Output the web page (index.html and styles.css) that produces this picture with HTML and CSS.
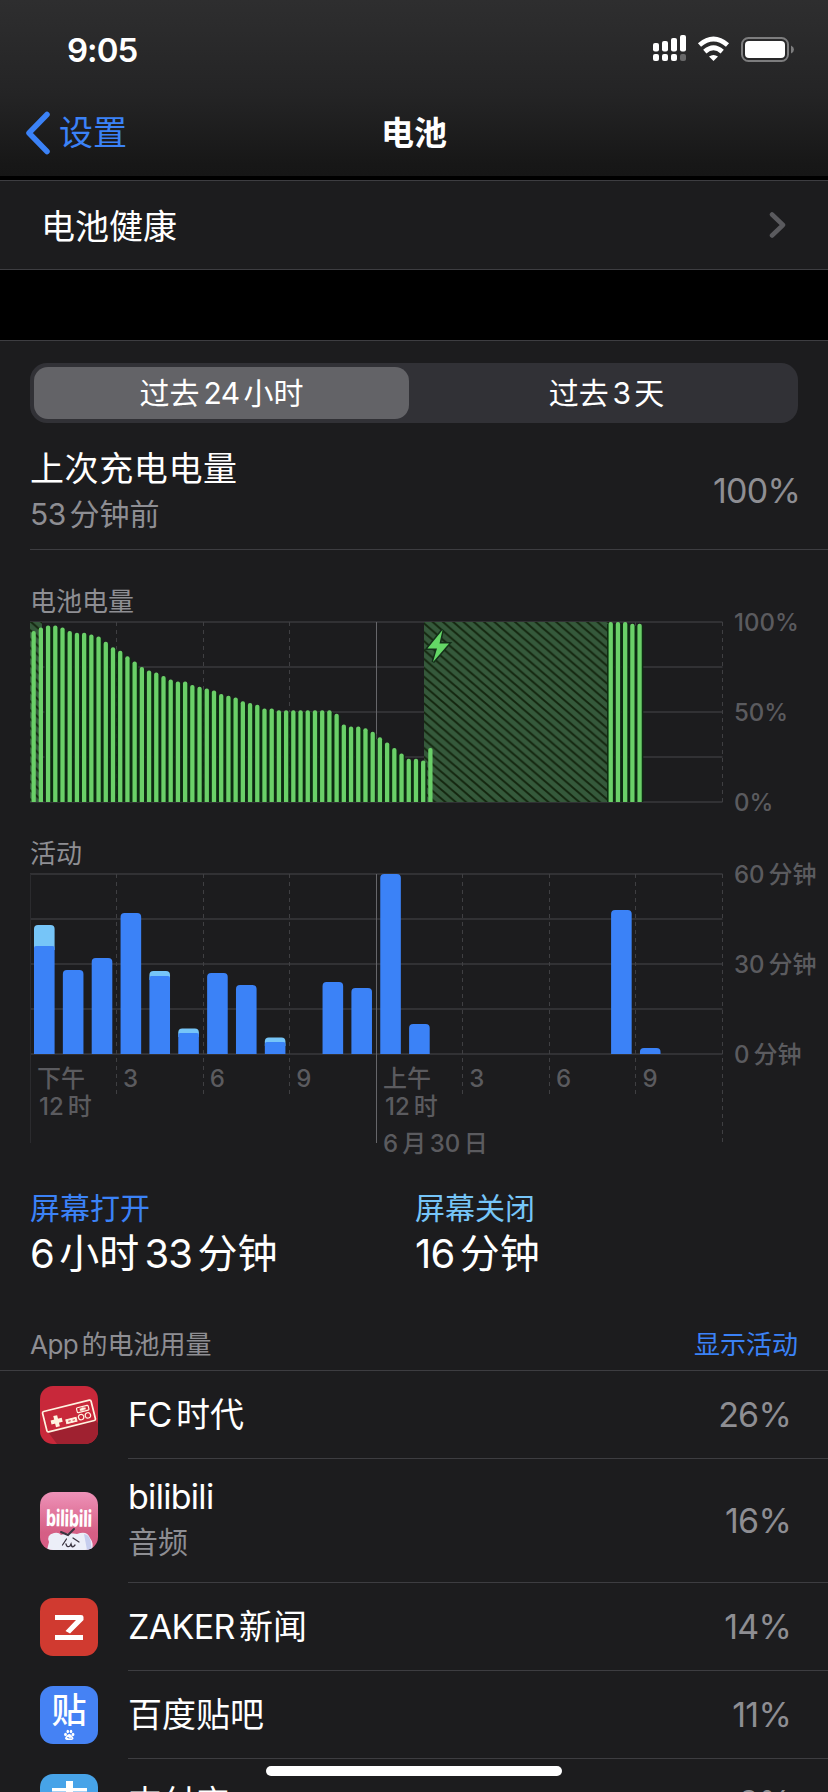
FILE: index.html
```html
<!DOCTYPE html>
<html lang="zh-CN">
<head>
    <meta charset="UTF-8">
    <meta name="viewport" content="width=device-width, initial-scale=1.0">
    <title>电池</title>
    <link rel="stylesheet" href="styles.css">
</head>
<body>
    <header class="header">
        <div class="status-bar">
            <span class="time">9:05</span>
            <svg class="status-icons" width="144" height="30" viewBox="0 0 144 30">
                <g fill="#fff">
                    <rect x="1" y="10" width="6" height="8.500" rx="2"/>
                    <rect x="10" y="8" width="6" height="10.500" rx="2"/>
                    <rect x="19" y="5" width="6" height="13.500" rx="2"/>
                    <rect x="28" y="2" width="6" height="16.500" rx="2"/>
                    <rect x="1" y="21" width="6" height="7" rx="2"/>
                    <rect x="10" y="21" width="6" height="7" rx="2"/>
                    <rect x="19" y="21" width="6" height="7" rx="2"/>
                    <rect x="28" y="21" width="6" height="7" rx="2" opacity=".3"/>
                    <path d="M61.500 28 L57 23.600 Q61.500 20.200 66 23.600 Z"/>
                </g>
                <g fill="none" stroke="#fff" stroke-width="4.800">
                    <path d="M47.500 12 Q61.500 0 75.500 12"/>
                    <path d="M52.800 18.600 Q61.500 10.800 70.200 18.600"/>
                </g>
                <rect x="90" y="5" width="46" height="23" rx="6.500" fill="none" stroke="#7d7d7e" stroke-width="2"/>
                <rect x="93" y="8" width="40" height="17" rx="4" fill="#fff"/>
                <path d="M139 12.500 Q142 14 142 16.500 Q142 19 139 20.500 Z" fill="#7d7d7e"/>
            </svg>
        </div>
        <nav class="nav">
            <a class="back">
                <svg width="26" height="44" viewBox="0 0 26 44"><path d="M23 3.500 L5 22 L23 40.500" fill="none" stroke="#3b82f7" stroke-width="5.500" stroke-linecap="round" stroke-linejoin="round"/></svg>
                <span>设置</span>
            </a>
            <h1 class="title">电池</h1>
            <span></span>
        </nav>
    </header>

    <section class="health">
        <span>电池健康</span>
        <svg width="18" height="28" viewBox="0 0 18 28"><path d="M4 3.500 L15 14 L4 24.500" fill="none" stroke="#5a5a5e" stroke-width="4.500" stroke-linecap="round" stroke-linejoin="round"/></svg>
    </section>

    <main class="usage">
        <div class="segmented">
            <span class="segment active">过去<span class="num">24</span>小时</span>
            <span class="segment">过去<span class="num">3</span>天</span>
        </div>

        <div class="last-charge">
            <div>
                <div class="charge-title">上次充电电量</div>
                <div class="charge-time"><span class="num first">53</span>分钟前</div>
            </div>
            <span class="percent">100%</span>
        </div>

        <h2 class="chart-label level-label">电池电量</h2>
        <svg class="chart" id="level-chart" width="828" height="190" viewBox="0 0 828 190"></svg>

        <h2 class="chart-label activity-label">活动</h2>
        <svg class="chart" id="activity-chart" width="828" height="290" viewBox="0 0 828 290"></svg>

        <div class="stats">
            <div>
                <div class="stat-name on">屏幕打开</div>
                <div class="stat-value"><span class="num first">6</span>小时<span class="num">33</span>分钟</div>
            </div>
            <div>
                <div class="stat-name off">屏幕关闭</div>
                <div class="stat-value"><span class="num first">16</span>分钟</div>
            </div>
        </div>

        <div class="list-header">
            <span><span class="num first">App</span>的电池用量</span>
            <a class="toggle">显示活动</a>
        </div>

        <ul class="app-list">
            <li class="app">
                <svg class="app-icon" viewBox="0 0 58 58">
                    <rect width="58" height="58" fill="#c8283a"/>
                    <path d="M8 46 L55 34 L58 37 V58 H17 Z" fill="#9f2130"/>
                    <g transform="rotate(-14 29 30)" fill="none" stroke="#fff3e0">
                        <rect x="4" y="19.500" width="50" height="21" rx="1.500" fill="#c8283a" stroke-width="1.700"/>
                        <path d="M10 32 H21.500 M15.700 26.300 V37.700" stroke-width="4"/>
                        <rect x="25" y="33" width="10.500" height="4" fill="#fff3e0" stroke-width="1"/>
                        <path d="M27 35 H29.500 M31.500 35 H34" stroke="#c8283a" stroke-width="1"/>
                        <rect x="38" y="24" width="12" height="5" rx="1" stroke-width="1.200"/>
                        <path d="M41 26.500 H47 M44 25 V28" stroke-width="2"/>
                        <circle cx="40.500" cy="34" r="2.700" stroke-width="1.200"/>
                        <circle cx="47.500" cy="34" r="2.700" stroke-width="1.200"/>
                    </g>
                </svg>
                <div class="app-row">
                    <div class="app-name"><span class="num first">FC</span>时代</div>
                    <span class="percent">26%</span>
                </div>
            </li>
            <li class="app tall">
                <svg class="app-icon" viewBox="0 0 58 58">
                    <defs>
                        <linearGradient id="pink" x1="0" y1="0" x2="0" y2="1">
                            <stop offset="0" stop-color="#ee92b8"/>
                            <stop offset=".7" stop-color="#d55f85"/>
                            <stop offset="1" stop-color="#d85c85"/>
                        </linearGradient>
                    </defs>
                    <rect width="58" height="58" fill="url(#pink)"/>
                    <path d="M7 58 L9 50 Q6 43 14 41 Q19 40 21 43 Q28 40 37 42 Q47 38 50 46 Q54 51 52 58 Z" fill="#eceef8"/>
                    <path d="M44 42 Q51 43 51 53 L52 58 H47 Z" fill="#c6cdee"/>
                    <g fill="none" stroke="#3a3440" stroke-linecap="round">
                        <path d="M21 40 L28 43 L34 37" stroke-width="2"/>
                        <path d="M26.500 47 L22.500 53 M33 46 L39 50 M26 52 Q27 56 30 54 L31 52 Q32 57 35 53" stroke-width="1.300"/>
                    </g>
                    <text class="bili-logo" x="6" y="34.500" textLength="46" lengthAdjust="spacingAndGlyphs" transform="rotate(1 29 30)">bilibili</text>
                </svg>
                <div class="app-row">
                    <div class="app-text">
                        <div class="app-name latin">bilibili</div>
                        <div class="app-note">音频</div>
                    </div>
                    <span class="percent">16%</span>
                </div>
            </li>
            <li class="app">
                <svg class="app-icon" viewBox="0 0 58 58">
                    <rect width="58" height="58" fill="#d03a30"/>
                    <path d="M15 17 H41 Q43.500 17 43.500 19 V22 L30 35.500 L25.500 33 L36 22 H15 Z M15 37 H43 V42 H15 Z" fill="#fff"/>
                </svg>
                <div class="app-row">
                    <div class="app-name"><span class="num first">ZAKER</span>新闻</div>
                    <span class="percent">14%</span>
                </div>
            </li>
            <li class="app">
                <svg class="app-icon" viewBox="0 0 58 58">
                    <rect width="58" height="58" fill="#4582f4"/>
                    <text class="tieba-logo" x="29" y="37" text-anchor="middle">贴</text>
                    <g fill="#fff">
                        <ellipse cx="25.500" cy="48.500" rx="1.400" ry="1.800"/>
                        <ellipse cx="27.800" cy="45.500" rx="1.300" ry="1.700"/>
                        <ellipse cx="31" cy="45.500" rx="1.300" ry="1.700"/>
                        <ellipse cx="33" cy="48.500" rx="1.400" ry="1.800"/>
                        <path d="M29.300 48 Q31 48 33.500 52 Q33.500 54.500 29.300 54 Q25 54.500 25 52 Q27.500 48 29.300 48"/>
                    </g>
                    <path d="M27 51.500 H29 V53 M31 51.500 V53" stroke="#4582f4" fill="none" stroke-width=".7"/>
                </svg>
                <div class="app-row">
                    <div class="app-name">百度贴吧</div>
                    <span class="percent">11%</span>
                </div>
            </li>
            <li class="app">
                <svg class="app-icon" viewBox="0 0 58 58">
                    <rect width="58" height="58" fill="#47a3e8"/>
                    <path d="M26 7 H33 V14 H47 V17.500 H33 V24 H26 V17.500 H12 V14 H26 Z" fill="#fff"/>
                </svg>
                <div class="app-row">
                    <div class="app-name">支付宝</div>
                    <span class="percent">8%</span>
                </div>
            </li>
        </ul>
    </main>
    <div class="home-indicator"></div>

    <script src="charts.js"></script>
</body>
</html>
```

FILE: styles.css
```css
* {
    box-sizing: border-box;
}
body {
    margin: 0;
    width: 828px;
    height: 1792px;
    overflow: hidden;
    background-color: #000;
    color: #fff;
    font-family: Inter, "Noto Sans CJK SC", sans-serif;
    font-size: 34px;
    line-height: 46px;
}
svg {
    display: block;
    flex-shrink: 0;
}
h1, h2, ul {
    margin: 0;
    padding: 0;
}
.num {
    margin: 0 0.13em;
    letter-spacing: -0.02em;
}
.num.first {
    margin-left: 0;
}
.latin {
    letter-spacing: -0.7px;
}
.header {
    height: 176px;
    background: linear-gradient(#2e2e2f 0, #2b2b2c 30px, #242425 95px, #171717 165px, #161616 176px);
}
.status-bar {
    display: flex;
    justify-content: space-between;
    align-items: center;
    height: 88px;
    padding: 12px 32px 0 67px;
}
.time {
    font-size: 33px;
    font-weight: 600;
    letter-spacing: -1px;
}
.status-icons {
    margin: -4px 0 0;
}
.nav {
    display: grid;
    grid-template-columns: 1fr auto 1fr;
    align-items: center;
    height: 88px;
    padding: 2px 24px 0;
}
.back {
    display: flex;
    align-items: center;
    gap: 9px;
    color: #3b82f7;
}
.title {
    font-size: 33px;
    font-weight: 600;
}
.health {
    display: flex;
    justify-content: space-between;
    align-items: center;
    height: 90px;
    margin-top: 4px;
    padding: 0 42px 0 41px;
    background-color: #1c1c1e;
    border-top: 1px solid #3d3d41;
    border-bottom: 1px solid #3d3d41;
}
.health span {
    padding-top: 3px;
}
.usage {
    height: 1452px;
    margin-top: 70px;
    overflow: hidden;
    background-color: #1c1c1e;
    border-top: 1px solid #3d3d41;
}
.segmented {
    display: flex;
    gap: 10px;
    height: 60px;
    margin: 22px 30px 0;
    padding: 4px;
    border-radius: 17px;
    background-color: #313136;
}
.segment {
    flex: 1;
    font-size: 30px;
    line-height: 53px;
    text-align: center;
}
.segment.active {
    border-radius: 14px;
    background-color: #636367;
}
.last-charge {
    display: flex;
    justify-content: space-between;
    height: 127px;
    margin-left: 30px;
    padding: 23px 28px 0 0;
    border-bottom: 1px solid #3d3d41;
}
.last-charge .percent {
    line-height: 90px;
}
.charge-title {
    letter-spacing: 0.6px;
}
.charge-time, .app-note {
    color: #8e8e93;
    font-size: 30px;
    line-height: 44px;
}
.percent {
    color: #8e8e93;
    letter-spacing: -0.8px;
}
.chart-label {
    height: 30px;
    padding-left: 30px;
    color: #8e8e93;
    font-size: 26px;
    font-weight: 400;
    line-height: 30px;
}
.level-label {
    margin-top: 37px;
}
.activity-label {
    margin-top: 36px;
}
.chart {
    margin-top: -5px;
    overflow: visible;
}
#level-chart {
    margin-top: -4px;
}
.chart text {
    fill: #5b5b5f;
    font-size: 24px;
    font-weight: 500;
}
.grid-line {
    stroke: #313134;
    stroke-width: 2;
}
.hour-line {
    stroke: #3f3f42;
    stroke-dasharray: 4 4;
}
.edge-line {
    stroke: #2b2b2e;
}
.day-line {
    stroke: #66666a;
}
.level-bar {
    fill: #6ad068;
}
.level-shade {
    fill: #0d2c12;
}
.screen-on {
    fill: #3b82f7;
}
.screen-off {
    fill: #76c5f8;
}
.stats {
    display: grid;
    grid-template-columns: 385px 1fr;
    margin-top: 34px;
    padding-left: 30px;
}
.stat-name {
    font-size: 30px;
    line-height: 40px;
}
.stat-name.on {
    color: #3b82f7;
}
.stat-name.off {
    color: #76c5f8;
}
.stat-value {
    font-size: 40px;
    line-height: 52px;
}
.list-header {
    display: flex;
    justify-content: space-between;
    height: 91px;
    padding: 50px 30px 0 30px;
    border-bottom: 1px solid #3d3d41;
    color: #8e8e93;
    font-size: 26px;
    line-height: 30px;
}
.toggle {
    color: #3b82f7;
}
.app-list {
    list-style: none;
}
.app {
    display: flex;
    align-items: center;
    height: 88px;
    padding-left: 40px;
}
.app.tall {
    height: 124px;
}
.app-icon {
    width: 58px;
    height: 58px;
    border-radius: 13px;
}
.app-row {
    display: flex;
    flex: 1;
    justify-content: space-between;
    align-items: center;
    height: 100%;
    margin-left: 30px;
    padding-right: 37px;
    border-bottom: 1px solid #3d3d41;
}
.app-text {
    padding-bottom: 4px;
}
.bili-logo {
    fill: #fff;
    font-size: 23px;
    font-weight: 800;
}
.tieba-logo {
    fill: #fff;
    font-size: 35px;
    font-weight: 500;
}
.home-indicator {
    position: absolute;
    left: 266px;
    top: 1766px;
    width: 296px;
    height: 10px;
    border-radius: 5px;
    background-color: #fff;
}
```

FILE: charts.js
```js
const LEFT = 30;
const RIGHT = 722.5;
const HOUR = (RIGHT - LEFT) / 24;
const HEIGHT = 180;

// battery level every 15 minutes, null while there is no sample
const levels = [
    95, 97, 98, 98, 97, 95, 94, 94, 93, 92, 89, 86, 84, 81, 78, 75, 73, 72, 70, 68,
    67, 67, 65, 64, 63, 62, 60, 59, 58, 56, 55, 54, 52, 52, 51, 51, 51, 51, 51, 51,
    51, 51, 49, 43, 42, 42, 41, 39, 36, 33, 30, 27, 24, 24, 23, 30,
    ...Array(24).fill(null), 100, 100, 100, 99, 99
];

// minutes per hour: [screen on, screen off]
const activity = [
    [36, 7], [28, 0], [32, 0], [47, 0], [26, 1.7], [7, 1.5], [27, 0], [23, 0],
    [4, 1.5], [0, 0], [24, 0], [22, 0], [60, 0], [10, 0], [0, 0], [0, 0],
    [0, 0], [0, 0], [0, 0], [0, 0], [48, 0], [2, 0]
];

function line(x1, y1, x2, y2, cls) {
    return `<line x1="${x1}" y1="${y1}" x2="${x2}" y2="${y2}" class="${cls}"/>`;
}

function bar(x, top, width, bottom, radius, cls) {
    const r = Math.min(radius, bottom - top);
    return `<path class="${cls}" d="M${x} ${bottom} V${top + r} Q${x} ${top} ${x + r} ${top} H${x + width - r} Q${x + width} ${top} ${x + width} ${top + r} V${bottom} Z"/>`;
}

function grid(top, hourEnd, dayEnd) {
    let out = '';
    for (let i = 0; i < 5; i++) {
        out += line(LEFT, top + i * 45, RIGHT, top + i * 45, 'grid-line');
    }
    for (let i = 0; i <= 8; i++) {
        const x = Math.floor(LEFT + i * HOUR * 3) + 0.5;
        if (i === 0) out += line(x, top, x, dayEnd, 'edge-line');
        else if (i === 4) out += line(x, top, x, dayEnd, 'day-line');
        else out += line(x, top, x, i === 8 ? dayEnd : hourEnd, 'hour-line');
    }
    return out;
}

function drawLevels() {
    const top = 9;
    const bottom = top + HEIGHT;
    const step = HOUR / 4;
    let out = `<defs><pattern id="hatch" width="10.300" height="8.900" patternUnits="userSpaceOnUse">
        <rect width="11" height="9" fill="#35593b"/>
        <path d="M-10.300 -8.900 L20.600 17.800 M-10.300 0 L10.300 17.800 M0 -8.900 L20.600 8.900" stroke="#14260f" stroke-width="2"/>
    </pattern></defs>`;
    out += grid(top, bottom, bottom);
    out += `<rect x="30" y="${top}" width="12" height="${HEIGHT}" fill="url(#hatch)"/>`;
    out += `<rect x="424" y="${top}" width="185" height="${HEIGHT}" fill="url(#hatch)"/>`;
    levels.forEach((v, i) => {
        if (v === null) return;
        const x = LEFT + 1.5 + i * step;
        const y = bottom - v * 1.8;
        if (i > 1 && i !== 55) out += `<rect class="level-shade" x="${x - 1.5}" y="${y + 2}" width="${step + 0.1}" height="${bottom - y - 2}"/>`;
        out += bar(x, y, 4.3, bottom, 2, 'level-bar');
    });
    out += '<path d="M442.500 17 L427.500 35.500 H437 L433 49 L449 30.500 H439.500 Z" fill="#64d866" stroke="#14301a" stroke-width="3" paint-order="stroke"/>';
    [['100%', 0], ['50%', 90], ['0%', 180]].forEach(([t, y]) => {
        out += `<text x="734" y="${top + y + 9}">${t}</text>`;
    });
    document.getElementById('level-chart').innerHTML = out;
}

function drawActivity() {
    const top = 10;
    const bottom = top + HEIGHT;
    let out = grid(top, bottom + 41, bottom + 89);
    activity.forEach(([on, off], i) => {
        const x = LEFT + 4 + i * HOUR;
        if (off) out += bar(x, bottom - (on + off) * 3, 20.6, bottom - on * 3 + 4, 4, 'screen-off');
        if (on) out += bar(x, bottom - on * 3, 20.6, bottom, off ? 2 : 4, 'screen-on');
    });
    [[60, 0], [30, 90], [0, 180]].forEach(([n, y]) => {
        out += `<text x="734" y="${top + y + 9}">${n}<tspan dx="4">分钟</tspan></text>`;
    });
    const y = bottom + 33;
    out += `<text x="37" y="${y}">下午</text><text x="39" y="${y + 28}">12<tspan dx="4">时</tspan></text>`;
    out += `<text x="383" y="${y}">上午</text><text x="385" y="${y + 28}">12<tspan dx="4">时</tspan></text>`;
    out += `<text x="383" y="${y + 65}">6<tspan dx="4">月</tspan><tspan dx="3.500">30</tspan><tspan dx="3.500">日</tspan></text>`;
    [3, 6, 9, 15, 18, 21].forEach(h => {
        out += `<text x="${LEFT + h * HOUR + 6.5}" y="${y}">${h % 12}</text>`;
    });
    document.getElementById('activity-chart').innerHTML = out;
}

drawLevels();
drawActivity();
```
